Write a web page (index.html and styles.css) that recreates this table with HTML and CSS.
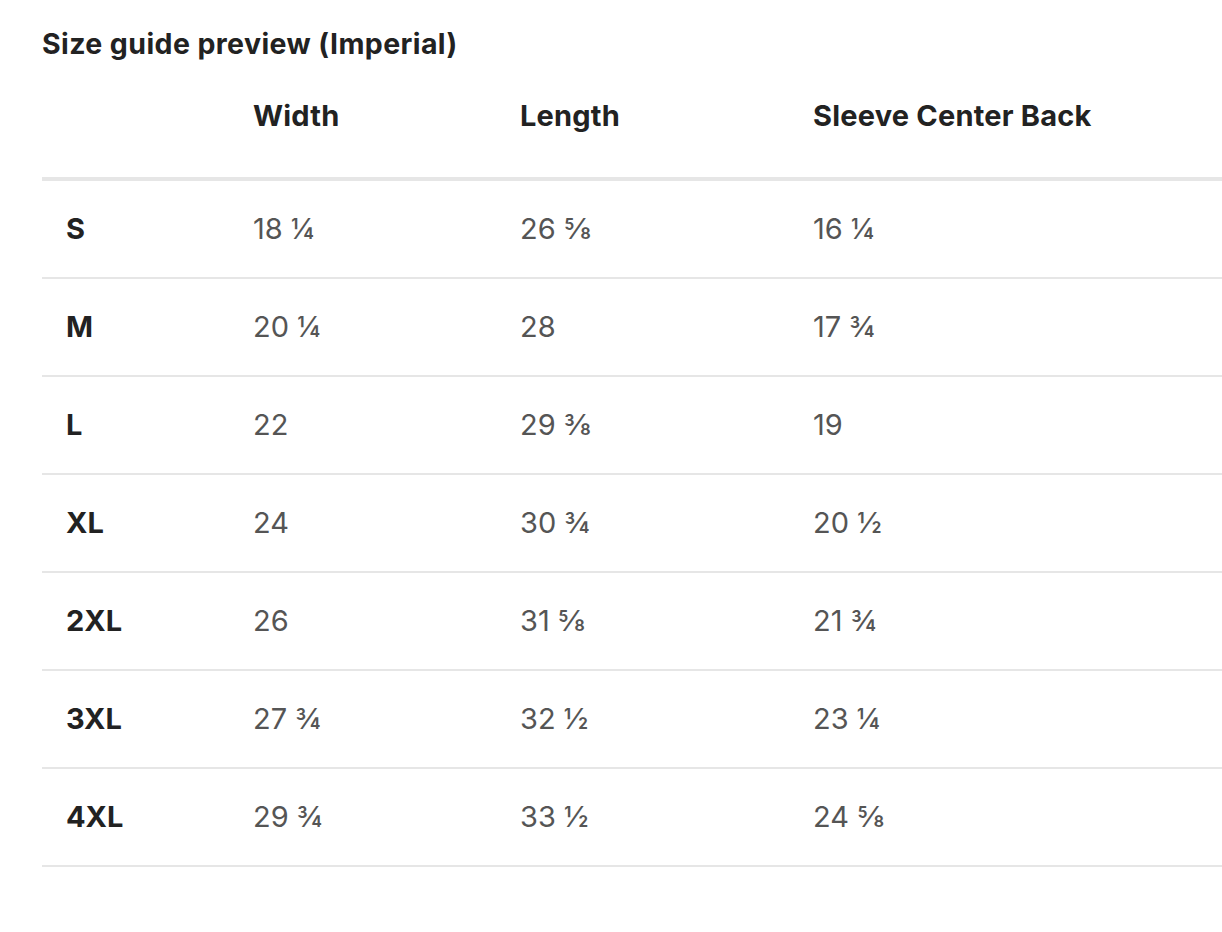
FILE: index.html
```html
<!DOCTYPE html>
<html>
<head>
<meta charset="utf-8">
<link rel="stylesheet" href="styles.css">
</head>
<body>
<div class="page">
  <h2 class="title">Size guide preview (Imperial)</h2>
  <table class="guide">
    <colgroup>
      <col class="c1"><col class="c2"><col class="c3"><col class="c4">
    </colgroup>
    <thead>
      <tr><th></th><th>Width</th><th>Length</th><th>Sleeve Center Back</th></tr>
    </thead>
    <tbody>
      <tr><th>S</th><td>18 ¼</td><td>26 ⅝</td><td>16 ¼</td></tr>
      <tr><th>M</th><td>20 ¼</td><td>28</td><td>17 ¾</td></tr>
      <tr><th>L</th><td>22</td><td>29 ⅜</td><td>19</td></tr>
      <tr><th>XL</th><td>24</td><td>30 ¾</td><td>20 ½</td></tr>
      <tr><th>2XL</th><td>26</td><td>31 ⅝</td><td>21 ¾</td></tr>
      <tr><th>3XL</th><td>27 ¾</td><td>32 ½</td><td>23 ¼</td></tr>
      <tr><th>4XL</th><td>29 ¾</td><td>33 ½</td><td>24 ⅝</td></tr>
    </tbody>
  </table>
</div>
</body>
</html>
```

FILE: styles.css
```css
html, body {
  margin: 0;
  padding: 0;
  background: #ffffff;
}
body {
  font-family: Inter, Lato, sans-serif;
  color: #222222;
  overflow: hidden;
}
.page {
  padding: 24px 0 0 42px;
}
.title {
  margin: 0;
  font-size: 28.5px;
  letter-spacing: 0.4px;
  line-height: 40px;
  font-weight: 700;
  color: #222222;
}
.guide {
  width: 1180px;
  border-collapse: collapse;
  table-layout: fixed;
}
.c1 { width: 187px; }
.c2 { width: 267px; }
.c3 { width: 293px; }
.c4 { width: auto; }
.guide thead th {
  text-align: left;
  font-size: 29px;
  letter-spacing: 0.2px;
  font-weight: 700;
  height: 115px;
  padding: 0 0 0 24px;
  vertical-align: top;
  line-height: 36px;
  padding-top: 34px;
  box-sizing: border-box;
  border-bottom: 4px solid #e6e6e6;
}
.guide tbody th,
.guide tbody td {
  text-align: left;
  height: 96px;
  padding: 0 0 0 24px;
  font-size: 29px;
  line-height: 36px;
  border-bottom: 2px solid #e6e6e6;
  vertical-align: middle;
}
.guide tbody th {
  font-weight: 700;
  color: #222222;
}
.guide tbody td {
  font-weight: 400;
  color: #555555;
}
```
